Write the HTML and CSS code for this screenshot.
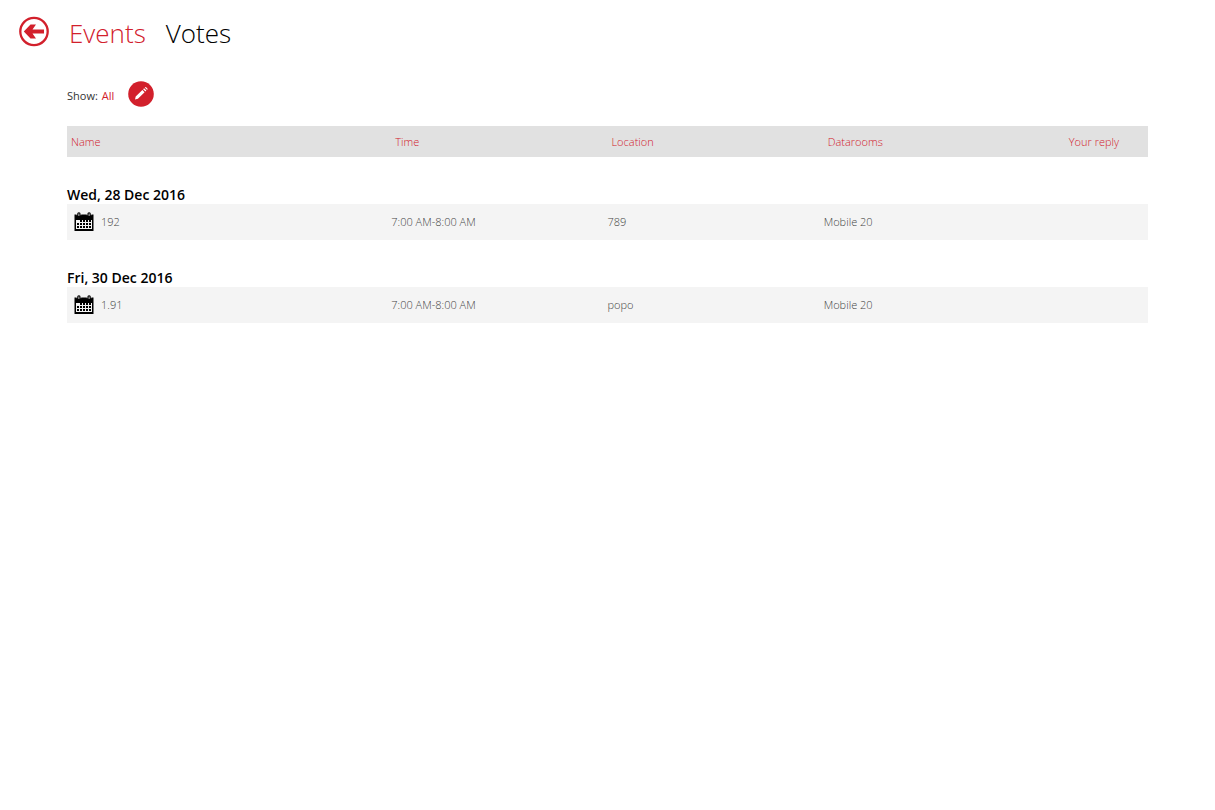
FILE: index.html
```html
<!DOCTYPE html>
<html lang="en">
<head>
<meta charset="utf-8">
<title>Events</title>
<link rel="stylesheet" href="styles.css">
</head>
<body>
<header class="topbar">
  <button class="back" type="button" aria-label="Back">
    <svg viewBox="0 0 30 30" width="30" height="30" aria-hidden="true">
      <circle cx="15" cy="15.500" r="13.700" fill="none" stroke="#d2202c" stroke-width="2.300"/>
      <path fill="#d2202c" d="M4.800 15.500 11.500 8.500H17L13.500 13.500H25v4H13.500l3.500 5h-5.500z"/>
    </svg>
  </button>
  <nav class="tabs">
    <a class="tab tab-active" href="#events">Events</a>
    <a class="tab" href="#votes">Votes</a>
  </nav>
</header>
<main class="content">
  <div class="filter">
    <div class="filter-text">
      <span class="filter-label">Show:</span>
      <a class="filter-value" href="#all">All</a>
    </div>
    <button class="edit" type="button" aria-label="Edit filter">
      <svg viewBox="0 0 26 26" width="26" height="26" aria-hidden="true">
        <circle cx="13" cy="13" r="12.8" fill="#d2202c"/>
        <path fill="#fff" d="M7 18.600 7.700 15.600l6.700-6.600 2.200 2.200-6.700 6.600zM15.100 8.200l1-1 2.300 2.300-1 1zM16.800 6.500q.8-.8 1.600 0l.8.8q.8.800 0 1.600z"/>
      </svg>
    </button>
  </div>
  <table class="events">
    <colgroup>
      <col class="col-name"><col class="col-mid"><col class="col-mid"><col class="col-mid"><col class="col-reply">
    </colgroup>
    <thead>
      <tr><th scope="col">Name</th><th scope="col">Time</th><th scope="col">Location</th><th scope="col">Datarooms</th><th class="reply" scope="col">Your reply</th></tr>
    </thead>
    <tbody>
      <tr class="day"><th colspan="5" scope="rowgroup">Wed, 28 Dec 2016</th></tr>
      <tr class="event">
        <td><div class="name">
          <svg viewBox="0 0 20 20" width="20" height="20" aria-hidden="true"><use href="#calendar"/></svg>
          <span>192</span></div></td>
        <td>7:00 AM-8:00 AM</td><td>789</td><td>Mobile 20</td><td></td>
      </tr>
    </tbody>
    <tbody>
      <tr class="day"><th colspan="5" scope="rowgroup">Fri, 30 Dec 2016</th></tr>
      <tr class="event">
        <td><div class="name">
          <svg viewBox="0 0 20 20" width="20" height="20" aria-hidden="true"><use href="#calendar"/></svg>
          <span>1.91</span></div></td>
        <td>7:00 AM-8:00 AM</td><td>popo</td><td>Mobile 20</td><td></td>
      </tr>
    </tbody>
  </table>
</main>
<svg class="defs" width="0" height="0" aria-hidden="true">
  <symbol id="calendar" viewBox="0 0 20 20">
    <path d="M.5 2.500h19V19H.5z"/>
    <path fill="#f4f4f4" d="M2 8h16v9H2z"/>
    <path d="M6 8h2v2H6zM9 8h2v2H9zM12 8h2v2h-2zM15 8h2v2h-2zM3 11h2v2H3zM6 11h2v2H6zM9 11h2v2H9zM12 11h2v2h-2zM15 11h2v2h-2zM3 14h2v2H3zM6 14h2v2H6zM9 14h2v2H9zM12 14h2v2h-2zM15 14h2v2h-2z"/>
    <path fill="#f4f4f4" d="M2.600 2h4.600v1.200H2.600zM12.800 2h4.600v1.200h-4.600z"/>
    <rect x="3.200" y=".3" width="3.400" height="4.800" rx="1.600"/>
    <rect x="13.400" y=".3" width="3.400" height="4.800" rx="1.600"/>
    <path fill="#f4f4f4" d="M4.500 1.500h.8v2.600h-.8zM14.700 1.500h.8v2.600h-.8z"/>
  </symbol>
</svg>
</body>
</html>
```
FILE: styles.css
```css
* { box-sizing: border-box; }

body {
  margin: 0;
  background: #fff;
  color: #000;
  font: 300 11px/16px "Open Sans", "Noto Sans", sans-serif;
}

a { color: inherit; text-decoration: none; }

button {
  display: block;
  padding: 0;
  border: 0;
  background: none;
  cursor: pointer;
}

svg { display: block; flex: none; overflow: visible; }

.topbar {
  display: flex;
  align-items: flex-start;
  gap: 20px;
  padding: 16px 19px 0;
}

.tabs { display: flex; gap: 20px; }

.tab { font-size: 26px; line-height: 34px; }

.tab-active, .filter-value { color: #d2202c; }

.content { padding: 31px 67px; }

.filter {
  display: flex;
  align-items: center;
  gap: 14px;
  margin-bottom: 19px;
}

.filter-text {
  display: flex;
  gap: 4px;
  padding-top: 3px;
  font-weight: 400;
}

.filter-label { color: #333; }

.events {
  width: 100%;
  table-layout: fixed;
  border-collapse: collapse;
}

.col-name { width: 30%; }
.col-mid { width: 20%; }
.col-reply { width: 10%; }

.events th, .events td { padding: 0; text-align: left; font-weight: 300; }

.events thead th {
  height: 31px;
  padding: 0 4px;
  background: #e1e1e1;
  color: #d2202c;
}

.events thead .reply { text-align: center; }

.events .day th {
  height: 47px;
  vertical-align: bottom;
  font-size: 14px;
  font-weight: 600;
  line-height: 18px;
}

.events .event td {
  height: 36px;
  background: #f4f4f4;
  color: #444;
}

.name {
  display: flex;
  align-items: center;
  gap: 7px;
  padding-left: 7px;
}

.defs { position: absolute; }
```
